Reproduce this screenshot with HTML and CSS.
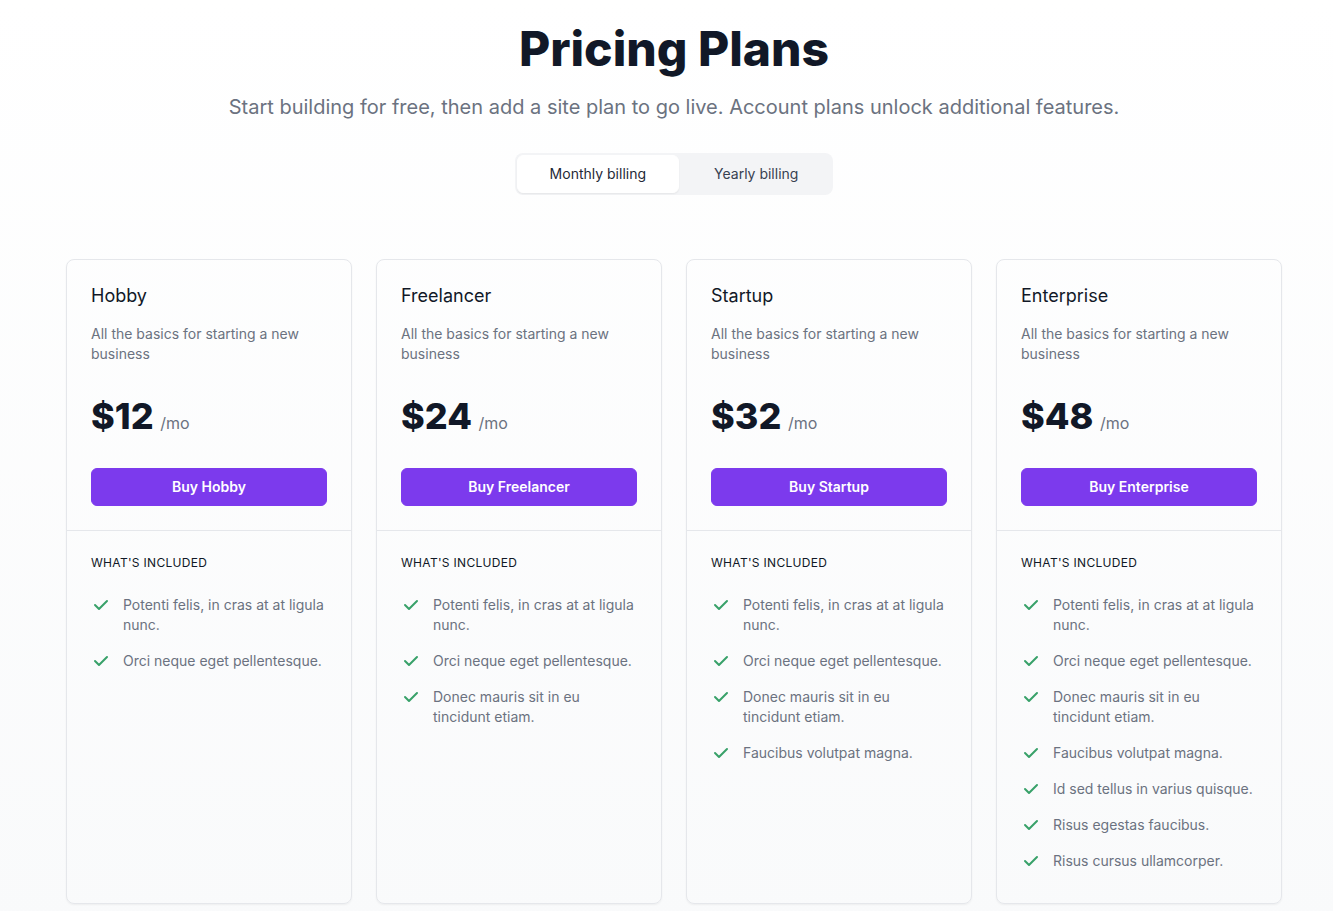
FILE: index.html
```html
<!DOCTYPE html>
<html lang="en">
<head>
<meta charset="utf-8">
<title>Pricing Plans</title>
<link rel="stylesheet" href="styles.css">
</head>
<body>
<div class="page">
  <main class="container">
    <header class="head">
      <h1 class="title">Pricing Plans</h1>
      <p class="subtitle">Start building for free, then add a site plan to go live. Account plans unlock additional features.</p>
      <div class="toggle">
        <button type="button" class="toggle-btn active">Monthly billing</button>
        <button type="button" class="toggle-btn">Yearly billing</button>
      </div>
    </header>
    <section class="grid">
      <div class="card">
        <div class="card-top">
          <h2 class="plan">Hobby</h2>
          <p class="desc">All the basics for starting a new business</p>
          <p class="price"><span class="amount">$12</span> <span class="per">/mo</span></p>
          <a href="#" class="buy">Buy Hobby</a>
        </div>
        <div class="card-bottom">
          <h3 class="inc">What's included</h3>
          <ul class="features">
            <li><svg class="check" viewBox="0 0 20 20"><path fill-rule="evenodd" d="M16.707 5.293a1 1 0 010 1.414l-8 8a1 1 0 01-1.414 0l-4-4a1 1 0 011.414-1.414L8 12.586l7.293-7.293a1 1 0 011.414 0z"/></svg><span>Potenti felis, in cras at at ligula nunc.</span></li>
            <li><svg class="check" viewBox="0 0 20 20"><path fill-rule="evenodd" d="M16.707 5.293a1 1 0 010 1.414l-8 8a1 1 0 01-1.414 0l-4-4a1 1 0 011.414-1.414L8 12.586l7.293-7.293a1 1 0 011.414 0z"/></svg><span>Orci neque eget pellentesque.</span></li>
          </ul>
        </div>
      </div>
      <div class="card">
        <div class="card-top">
          <h2 class="plan">Freelancer</h2>
          <p class="desc">All the basics for starting a new business</p>
          <p class="price"><span class="amount">$24</span> <span class="per">/mo</span></p>
          <a href="#" class="buy">Buy Freelancer</a>
        </div>
        <div class="card-bottom">
          <h3 class="inc">What's included</h3>
          <ul class="features">
            <li><svg class="check" viewBox="0 0 20 20"><path fill-rule="evenodd" d="M16.707 5.293a1 1 0 010 1.414l-8 8a1 1 0 01-1.414 0l-4-4a1 1 0 011.414-1.414L8 12.586l7.293-7.293a1 1 0 011.414 0z"/></svg><span>Potenti felis, in cras at at ligula nunc.</span></li>
            <li><svg class="check" viewBox="0 0 20 20"><path fill-rule="evenodd" d="M16.707 5.293a1 1 0 010 1.414l-8 8a1 1 0 01-1.414 0l-4-4a1 1 0 011.414-1.414L8 12.586l7.293-7.293a1 1 0 011.414 0z"/></svg><span>Orci neque eget pellentesque.</span></li>
            <li><svg class="check" viewBox="0 0 20 20"><path fill-rule="evenodd" d="M16.707 5.293a1 1 0 010 1.414l-8 8a1 1 0 01-1.414 0l-4-4a1 1 0 011.414-1.414L8 12.586l7.293-7.293a1 1 0 011.414 0z"/></svg><span>Donec mauris sit in eu tincidunt etiam.</span></li>
          </ul>
        </div>
      </div>
      <div class="card">
        <div class="card-top">
          <h2 class="plan">Startup</h2>
          <p class="desc">All the basics for starting a new business</p>
          <p class="price"><span class="amount">$32</span> <span class="per">/mo</span></p>
          <a href="#" class="buy">Buy Startup</a>
        </div>
        <div class="card-bottom">
          <h3 class="inc">What's included</h3>
          <ul class="features">
            <li><svg class="check" viewBox="0 0 20 20"><path fill-rule="evenodd" d="M16.707 5.293a1 1 0 010 1.414l-8 8a1 1 0 01-1.414 0l-4-4a1 1 0 011.414-1.414L8 12.586l7.293-7.293a1 1 0 011.414 0z"/></svg><span>Potenti felis, in cras at at ligula nunc.</span></li>
            <li><svg class="check" viewBox="0 0 20 20"><path fill-rule="evenodd" d="M16.707 5.293a1 1 0 010 1.414l-8 8a1 1 0 01-1.414 0l-4-4a1 1 0 011.414-1.414L8 12.586l7.293-7.293a1 1 0 011.414 0z"/></svg><span>Orci neque eget pellentesque.</span></li>
            <li><svg class="check" viewBox="0 0 20 20"><path fill-rule="evenodd" d="M16.707 5.293a1 1 0 010 1.414l-8 8a1 1 0 01-1.414 0l-4-4a1 1 0 011.414-1.414L8 12.586l7.293-7.293a1 1 0 011.414 0z"/></svg><span>Donec mauris sit in eu tincidunt etiam.</span></li>
            <li><svg class="check" viewBox="0 0 20 20"><path fill-rule="evenodd" d="M16.707 5.293a1 1 0 010 1.414l-8 8a1 1 0 01-1.414 0l-4-4a1 1 0 011.414-1.414L8 12.586l7.293-7.293a1 1 0 011.414 0z"/></svg><span>Faucibus volutpat magna.</span></li>
          </ul>
        </div>
      </div>
      <div class="card">
        <div class="card-top">
          <h2 class="plan">Enterprise</h2>
          <p class="desc">All the basics for starting a new business</p>
          <p class="price"><span class="amount">$48</span> <span class="per">/mo</span></p>
          <a href="#" class="buy">Buy Enterprise</a>
        </div>
        <div class="card-bottom">
          <h3 class="inc">What's included</h3>
          <ul class="features">
            <li><svg class="check" viewBox="0 0 20 20"><path fill-rule="evenodd" d="M16.707 5.293a1 1 0 010 1.414l-8 8a1 1 0 01-1.414 0l-4-4a1 1 0 011.414-1.414L8 12.586l7.293-7.293a1 1 0 011.414 0z"/></svg><span>Potenti felis, in cras at at ligula nunc.</span></li>
            <li><svg class="check" viewBox="0 0 20 20"><path fill-rule="evenodd" d="M16.707 5.293a1 1 0 010 1.414l-8 8a1 1 0 01-1.414 0l-4-4a1 1 0 011.414-1.414L8 12.586l7.293-7.293a1 1 0 011.414 0z"/></svg><span>Orci neque eget pellentesque.</span></li>
            <li><svg class="check" viewBox="0 0 20 20"><path fill-rule="evenodd" d="M16.707 5.293a1 1 0 010 1.414l-8 8a1 1 0 01-1.414 0l-4-4a1 1 0 011.414-1.414L8 12.586l7.293-7.293a1 1 0 011.414 0z"/></svg><span>Donec mauris sit in eu tincidunt etiam.</span></li>
            <li><svg class="check" viewBox="0 0 20 20"><path fill-rule="evenodd" d="M16.707 5.293a1 1 0 010 1.414l-8 8a1 1 0 01-1.414 0l-4-4a1 1 0 011.414-1.414L8 12.586l7.293-7.293a1 1 0 011.414 0z"/></svg><span>Faucibus volutpat magna.</span></li>
            <li><svg class="check" viewBox="0 0 20 20"><path fill-rule="evenodd" d="M16.707 5.293a1 1 0 010 1.414l-8 8a1 1 0 01-1.414 0l-4-4a1 1 0 011.414-1.414L8 12.586l7.293-7.293a1 1 0 011.414 0z"/></svg><span>Id sed tellus in varius quisque.</span></li>
            <li><svg class="check" viewBox="0 0 20 20"><path fill-rule="evenodd" d="M16.707 5.293a1 1 0 010 1.414l-8 8a1 1 0 01-1.414 0l-4-4a1 1 0 011.414-1.414L8 12.586l7.293-7.293a1 1 0 011.414 0z"/></svg><span>Risus egestas faucibus.</span></li>
            <li><svg class="check" viewBox="0 0 20 20"><path fill-rule="evenodd" d="M16.707 5.293a1 1 0 010 1.414l-8 8a1 1 0 01-1.414 0l-4-4a1 1 0 011.414-1.414L8 12.586l7.293-7.293a1 1 0 011.414 0z"/></svg><span>Risus cursus ullamcorper.</span></li>
          </ul>
        </div>
      </div>
    </section>
  </main>
</div>
</body>
</html>
```

FILE: styles.css
```css
* { box-sizing: border-box; }
html, body { margin: 0; padding: 0; }
body {
  font-family: Inter, "Liberation Sans", sans-serif;
  color: #111827;
  background: #ffffff;
  -webkit-font-smoothing: antialiased;
}
.page {
  min-height: 911px;
  background: linear-gradient(to bottom, #ffffff, #f9fafb);
  padding: 25px 0 24px 15px;
}
.container {
  max-width: 1216px;
  margin: 0 auto;
}
.head {
  display: flex;
  flex-direction: column;
  align-items: center;
}
.title {
  margin: 0;
  font-size: 48px;
  line-height: 48px;
  font-weight: 800;
  color: #111827;
  text-align: center;
}
.subtitle {
  margin: 20px 0 0;
  font-size: 20px;
  line-height: 28px;
  color: #6b7280;
  text-align: center;
}
.toggle {
  margin-top: 32px;
  display: flex;
  gap: 2px;
  padding: 2px;
  background: #f3f4f6;
  border-radius: 8px;
}
.toggle-btn {
  font-family: inherit;
  font-size: 14px;
  line-height: 20px;
  font-weight: 400;
  color: #374151;
  background: transparent;
  border: 1px solid transparent;
  border-radius: 6px;
  padding: 8px 32px;
  white-space: nowrap;
  cursor: pointer;
}
.toggle-btn.active {
  background: #ffffff;
  color: #1f2937;
  border-color: #ffffff;
  box-shadow: 0 1px 2px rgba(0, 0, 0, 0.06);
}
.grid {
  margin-top: 64px;
  display: grid;
  grid-template-columns: repeat(4, 1fr);
  gap: 24px;
}
.card {
  border: 1px solid #e5e7eb;
  border-radius: 8px;
  box-shadow: 0 1px 2px rgba(0, 0, 0, 0.05);
  display: flex;
  flex-direction: column;
}
.card-top {
  padding: 24px;
  border-bottom: 1px solid #e5e7eb;
}
.plan {
  margin: 0;
  font-size: 18px;
  line-height: 24px;
  font-weight: 400;
  color: #111827;
}
.desc {
  margin: 16px 0 0;
  font-size: 14px;
  line-height: 20px;
  color: #6b7280;
}
.price {
  margin: 32px 0 0;
  line-height: 40px;
}
.amount {
  font-size: 36px;
  line-height: 40px;
  font-weight: 800;
  color: #111827;
}
.per {
  margin-left: 2px;
  font-size: 16px;
  line-height: 24px;
  font-weight: 400;
  color: #6b7280;
}
.buy {
  margin-top: 25px;
  display: block;
  width: 100%;
  background: #7c3aed;
  border: 1px solid #7c3aed;
  border-radius: 6px;
  padding: 8px 0;
  font-size: 14px;
  line-height: 20px;
  font-weight: 600;
  color: #ffffff;
  text-align: center;
  text-decoration: none;
}
.card-bottom {
  padding: 24px 24px 32px;
}
.inc {
  margin: 0;
  font-size: 12px;
  line-height: 16px;
  font-weight: 400;
  color: #111827;
  letter-spacing: 0.025em;
  text-transform: uppercase;
}
.features {
  list-style: none;
  margin: 24px 0 0;
  padding: 0;
  display: flex;
  flex-direction: column;
  gap: 16px;
}
.features li {
  display: flex;
  gap: 12px;
}
.check {
  flex-shrink: 0;
  width: 20px;
  height: 20px;
  fill: #38a169;
}
.features span {
  font-size: 14px;
  line-height: 20px;
  color: #6b7280;
}
```
